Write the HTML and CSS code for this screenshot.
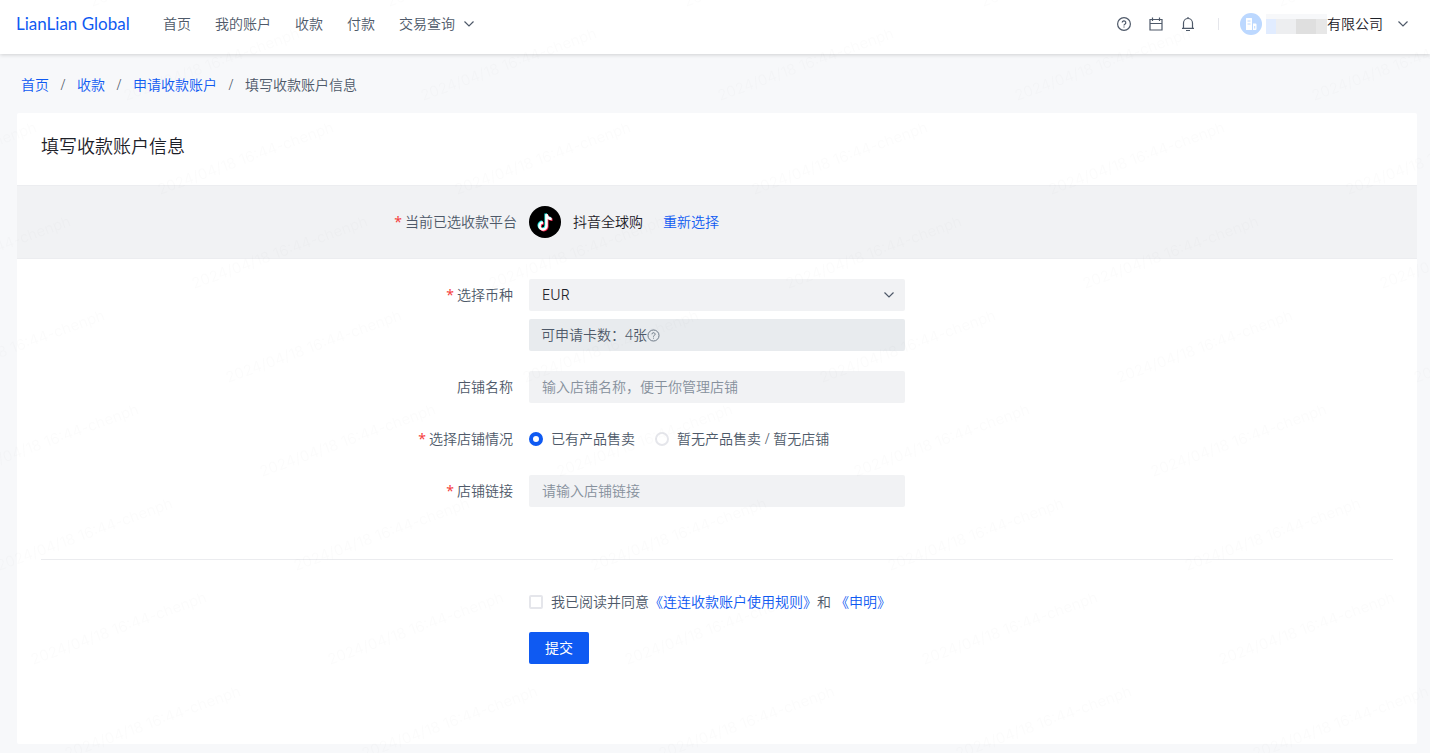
FILE: index.html
```
<!DOCTYPE html>
<html lang="zh-CN">
<head>
    <meta charset="UTF-8">
    <meta name="viewport" content="width=device-width, initial-scale=1.0">
    <title>填写收款账户信息 - LianLian Global</title>
    <link rel="stylesheet" href="styles.css">
</head>
<body>
    <header class="header">
        <a href="#" class="logo">LianLian Global</a>
        <nav class="nav">
            <a href="#">首页</a>
            <a href="#">我的账户</a>
            <a href="#">收款</a>
            <a href="#">付款</a>
            <a href="#" class="nav-more">交易查询
                <svg class="chevron" viewBox="0 0 10 10"><path d="M0.500 2.500L5 7l4.500-4.500"/></svg>
            </a>
        </nav>
        <div class="tools">
            <button type="button" class="icon-btn" aria-label="帮助">
                <svg viewBox="0 0 16 16">
                    <circle cx="8" cy="8" r="6.400"/>
                    <path d="M6.200 6.600a1.800 1.800 0 1 1 2.700 1.550c-.6.35-.9.6-.9 1.250M8 10.600v1"/>
                </svg>
            </button>
            <button type="button" class="icon-btn" aria-label="日历">
                <svg viewBox="0 0 16 16"><path d="M2 3.500h12v10.500H2zM2 7.500h12M4.500 1.500v3.500M11.500 1.500v3.500"/></svg>
            </button>
            <button type="button" class="icon-btn" aria-label="通知">
                <svg viewBox="0 0 16 16"><path d="M2 12.300h12M3.500 12.300V7a4.500 4.500 0 0 1 9 0v5.300M8 1v1.500M6 14.500h4"/></svg>
            </button>
        </div>
        <button type="button" class="account">
            <svg class="avatar" viewBox="0 0 22 22">
                <circle cx="11" cy="11" r="11" fill="#bcd8ff"/>
                <path d="M6 5.500q0-.5.500-.5h5q.5 0 .5.500V17H6zM13 10.500h2.500q1 0 1 1V16q0 1-1 1H13z" fill="#fff"/>
                <path d="M7.500 8h3M7.500 11h3M14.700 13v2.500" stroke="#bcd8ff"/>
            </svg>
            <span class="masked"></span>
            <span>有限公司</span>
            <svg class="chevron" viewBox="0 0 10 10"><path d="M0.500 2.500L5 7l4.500-4.500"/></svg>
        </button>
    </header>

    <main class="page">
        <nav class="breadcrumb">
            <a href="#">首页</a><i>/</i>
            <a href="#">收款</a><i>/</i>
            <a href="#">申请收款账户</a><i>/</i>
            <span>填写收款账户信息</span>
        </nav>

        <form class="card">
            <h1 class="card-title">填写收款账户信息</h1>

            <div class="platform form-row">
                <span class="label required">当前已选收款平台</span>
                <div class="platform-info">
                    <svg class="platform-logo" viewBox="0 0 32 32">
                        <circle cx="16" cy="16" r="16" fill="#000"/>
                        <g fill="none" stroke-width="2.500">
                            <path d="M16.700 7.500v11.800a3.500 3.500 0 1 1-3.500-3.500M16.700 7.500c.3 2.900 2.200 4.600 5.200 4.800" stroke="#25f4ee"/>
                            <path d="M18.300 8.900v11.800a3.500 3.500 0 1 1-3.500-3.500M18.300 8.900c.3 2.900 2.200 4.600 5.200 4.800" stroke="#fe2c55"/>
                            <path d="M17.500 8.200v11.800a3.500 3.500 0 1 1-3.500-3.500M17.500 8.200c.3 2.900 2.200 4.600 5.200 4.800" stroke="#fff"/>
                        </g>
                    </svg>
                    <span class="platform-name">抖音全球购</span>
                    <a href="#">重新选择</a>
                </div>
            </div>

            <div class="fields">
                <div class="form-row">
                    <label class="label required" for="currency">选择币种</label>
                    <div class="control">
                        <div class="select">
                            <select id="currency">
                                <option>EUR</option>
                            </select>
                            <svg class="chevron" viewBox="0 0 10 10"><path d="M0.500 2.500L5 7l4.500-4.500"/></svg>
                        </div>
                        <div class="quota">
                            可申请卡数：4张<svg class="help" viewBox="0 0 16 16">
                                <circle cx="8" cy="8" r="6.800"/>
                                <path d="M6.100 6.500a1.900 1.900 0 1 1 2.800 1.600c-.6.35-.9.6-.9 1.300M8 10.700v1.100"/>
                            </svg>
                        </div>
                    </div>
                </div>

                <div class="form-row">
                    <label class="label" for="shopName">店铺名称</label>
                    <input class="text-input" type="text" id="shopName" placeholder="输入店铺名称，便于你管理店铺">
                </div>

                <div class="form-row">
                    <span class="label required" id="statusLabel">选择店铺情况</span>
                    <div class="radios" role="radiogroup" aria-labelledby="statusLabel">
                        <label><input type="radio" name="status" checked>已有产品售卖</label>
                        <label><input type="radio" name="status">暂无产品售卖 / 暂无店铺</label>
                    </div>
                </div>

                <div class="form-row">
                    <label class="label required" for="shopLink">店铺链接</label>
                    <input class="text-input" type="text" id="shopLink" placeholder="请输入店铺链接">
                </div>
            </div>

            <div class="footer form-row">
                <div class="footer-body">
                    <div class="agree">
                        <input type="checkbox" id="agree">
                        <label for="agree">我已阅读并同意</label><a href="#">《连连收款账户使用规则》</a><span>和</span><a href="#" class="statement">《申明》</a>
                    </div>
                    <button type="submit" class="submit-btn">提交</button>
                </div>
            </div>
        </form>
    </main>

    <svg class="watermark" id="watermark" aria-hidden="true"></svg>
    <script src="watermark.js"></script>
</body>
</html>
```
FILE: styles.css
```
* {
    margin: 0;
    padding: 0;
    box-sizing: border-box;
}

body {
    min-height: 100vh;
    background: #f7f8fa;
    color: #4e5969;
    font-family: "Noto Sans", "Noto Sans CJK SC", sans-serif;
    font-size: 14px;
    font-weight: 350;
    line-height: 22px;
}

a {
    color: #0f5af2;
    text-decoration: none;
}

button,
input,
select {
    font: inherit;
    color: inherit;
    border: none;
    background: none;
}

button {
    cursor: pointer;
}

svg {
    flex: none;
    fill: none;
    stroke: none;
}

.chevron {
    width: 10px;
    height: 10px;
    stroke: #4e5969;
    stroke-width: 1.2;
}

/* Header */
.header {
    position: relative;
    display: flex;
    align-items: center;
    height: 54px;
    padding: 0 22px 6px 16px;
    background: #fff;
    box-shadow: 0 1px 4px rgba(0, 0, 0, 0.16);
}

.logo {
    width: 115px;
    font-family: Lato, sans-serif;
    font-size: 17px;
    font-weight: 400;
    white-space: nowrap;
}

.nav {
    display: flex;
    gap: 24px;
    margin-left: 32px;
    white-space: nowrap;
}

.nav a {
    color: #4e5969;
}

.nav-more {
    display: flex;
    align-items: center;
    gap: 9px;
}

.tools {
    display: flex;
    gap: 16px;
    margin-left: auto;
    padding-right: 22px;
    border-right: 1px solid #e5e6eb;
    height: 12px;
    align-items: center;
}

.icon-btn {
    width: 16px;
    height: 16px;
}

.icon-btn svg {
    display: block;
    width: 16px;
    height: 16px;
    stroke: #4e5969;
    stroke-width: 1.2;
}

.account {
    display: flex;
    align-items: center;
    margin-left: 21px;
    color: #1d2129;
}

.account .chevron {
    margin-left: 15px;
}

.avatar {
    width: 22px;
    height: 22px;
    margin-right: 4px;
}

.masked {
    width: 61px;
    height: 20px;
    background: linear-gradient(90deg, #e1ecff 0 10px, #edeef0 10px 30px, #dfdfdf 30px 50px, #e7e7e7 50px);
    border-top: 5px solid #f7f8fa;
}

/* Breadcrumb */
.page {
    padding: 20px 13px 9px 17px;
}

.breadcrumb {
    display: flex;
    padding-left: 4px;
    margin-bottom: 17px;
}

.breadcrumb i {
    width: 28px;
    font-style: normal;
    text-align: center;
}

/* Card */
.card {
    min-height: 631px;
    background: #fff;
    border-radius: 2px;
}

.card-title {
    padding: 20px 24px;
    color: #1d2129;
    font-size: 18px;
    font-weight: 350;
    line-height: 26px;
    height: 72px;
}

.form-row {
    display: grid;
    grid-template-columns: 1fr 376px 1fr;
}

.label {
    padding-right: 16px;
    line-height: 32px;
    text-align: right;
}

.required::before {
    content: "*";
    margin-right: 3px;
    color: #f53f3f;
    font-weight: 400;
}

.platform {
    padding: 20px 0;
    height: 74px;
    background: #f1f2f4;
    border-top: 1px solid #ecedf0;
    border-bottom: 1px solid #ecedf0;
}

.platform .label {
    padding-right: 12px;
}

.platform-info {
    display: flex;
    align-items: center;
    height: 32px;
}

.platform-logo {
    width: 32px;
    height: 32px;
}

.platform-name {
    margin: 0 20px 0 12px;
    color: #1d2129;
}

.fields {
    display: grid;
    gap: 20px;
    margin: 0 24px;
    padding: 20px 0 52px;
    border-bottom: 1px solid #ebecef;
}

.control {
    display: grid;
    gap: 8px;
}

.select {
    position: relative;
    height: 32px;
}

.select select {
    width: 100%;
    height: 32px;
    padding: 0 13px;
    appearance: none;
    background: #f1f2f4;
    border-radius: 2px;
    color: #1d2129;
    font-family: Inter, sans-serif;
}

.select .chevron {
    position: absolute;
    top: 11px;
    right: 11px;
    pointer-events: none;
}

.quota {
    display: flex;
    align-items: center;
    height: 32px;
    padding: 0 12px;
    background: #e8ebee;
    border-radius: 2px;
}

.help {
    width: 13px;
    height: 13px;
    stroke: #6b7785;
    stroke-width: 1.2;
}

.text-input {
    height: 32px;
    padding: 0 13px 2px;
    background: #f1f2f4;
    border-radius: 2px;
    outline: none;
}

.text-input::placeholder {
    color: #86909c;
    opacity: 1;
}

.radios {
    display: flex;
    align-items: center;
    gap: 20px;
    height: 32px;
}

.radios label {
    display: flex;
    align-items: center;
    gap: 8px;
}

.radios input {
    width: 14px;
    height: 14px;
    appearance: none;
    border: 2px solid #e5e6eb;
    border-radius: 50%;
}

.radios input:checked {
    border: 4px solid #0f5af2;
}

/* Footer */
.footer {
    margin: 0 24px;
    padding: 31px 0 80px;
}

.footer-body {
    grid-column: 2;
}

.agree {
    display: flex;
    align-items: center;
    margin-bottom: 19px;
    white-space: nowrap;
}

.agree input {
    width: 14px;
    height: 14px;
    margin-right: 8px;
    appearance: none;
    border: 2px solid #e5e6eb;
    border-radius: 2px;
}

.agree input:checked {
    border-color: #0f5af2;
    background: #0f5af2;
}

.statement {
    margin-left: 4px;
}

.submit-btn {
    width: 60px;
    height: 32px;
    background: #0f5af2;
    border-radius: 2px;
    color: #fff;
    font-weight: 400;
}

/* Watermark */
.watermark {
    position: fixed;
    top: 0;
    left: 0;
    width: 100%;
    height: 100%;
    pointer-events: none;
}

.watermark text {
    fill: rgba(0, 0, 0, 0.015);
    font-family: Inter, sans-serif;
    font-size: 15px;
    font-weight: 400;
}
```
FILE: watermark.js
```
// Repeats the user's watermark over the window, each row shifted to the right
const layer = document.getElementById('watermark');

function drawWatermark() {
    layer.innerHTML = '';
    for (let row = 0; row * 94 < window.innerHeight + 50; row++) {
        const y = 7 + row * 94;
        for (let x = (92 + row * 34) % 297 - 297; x < window.innerWidth; x += 297) {
            // skip the ones that end left of the window
            if (x < -170) continue;
            const text = document.createElementNS('http://www.w3.org/2000/svg', 'text');
            text.setAttribute('transform', `translate(${x} ${y}) rotate(-20)`);
            text.textContent = '2024/04/18 16:44-chenph';
            layer.appendChild(text);
        }
    }
}

drawWatermark();
window.addEventListener('resize', drawWatermark);
```
